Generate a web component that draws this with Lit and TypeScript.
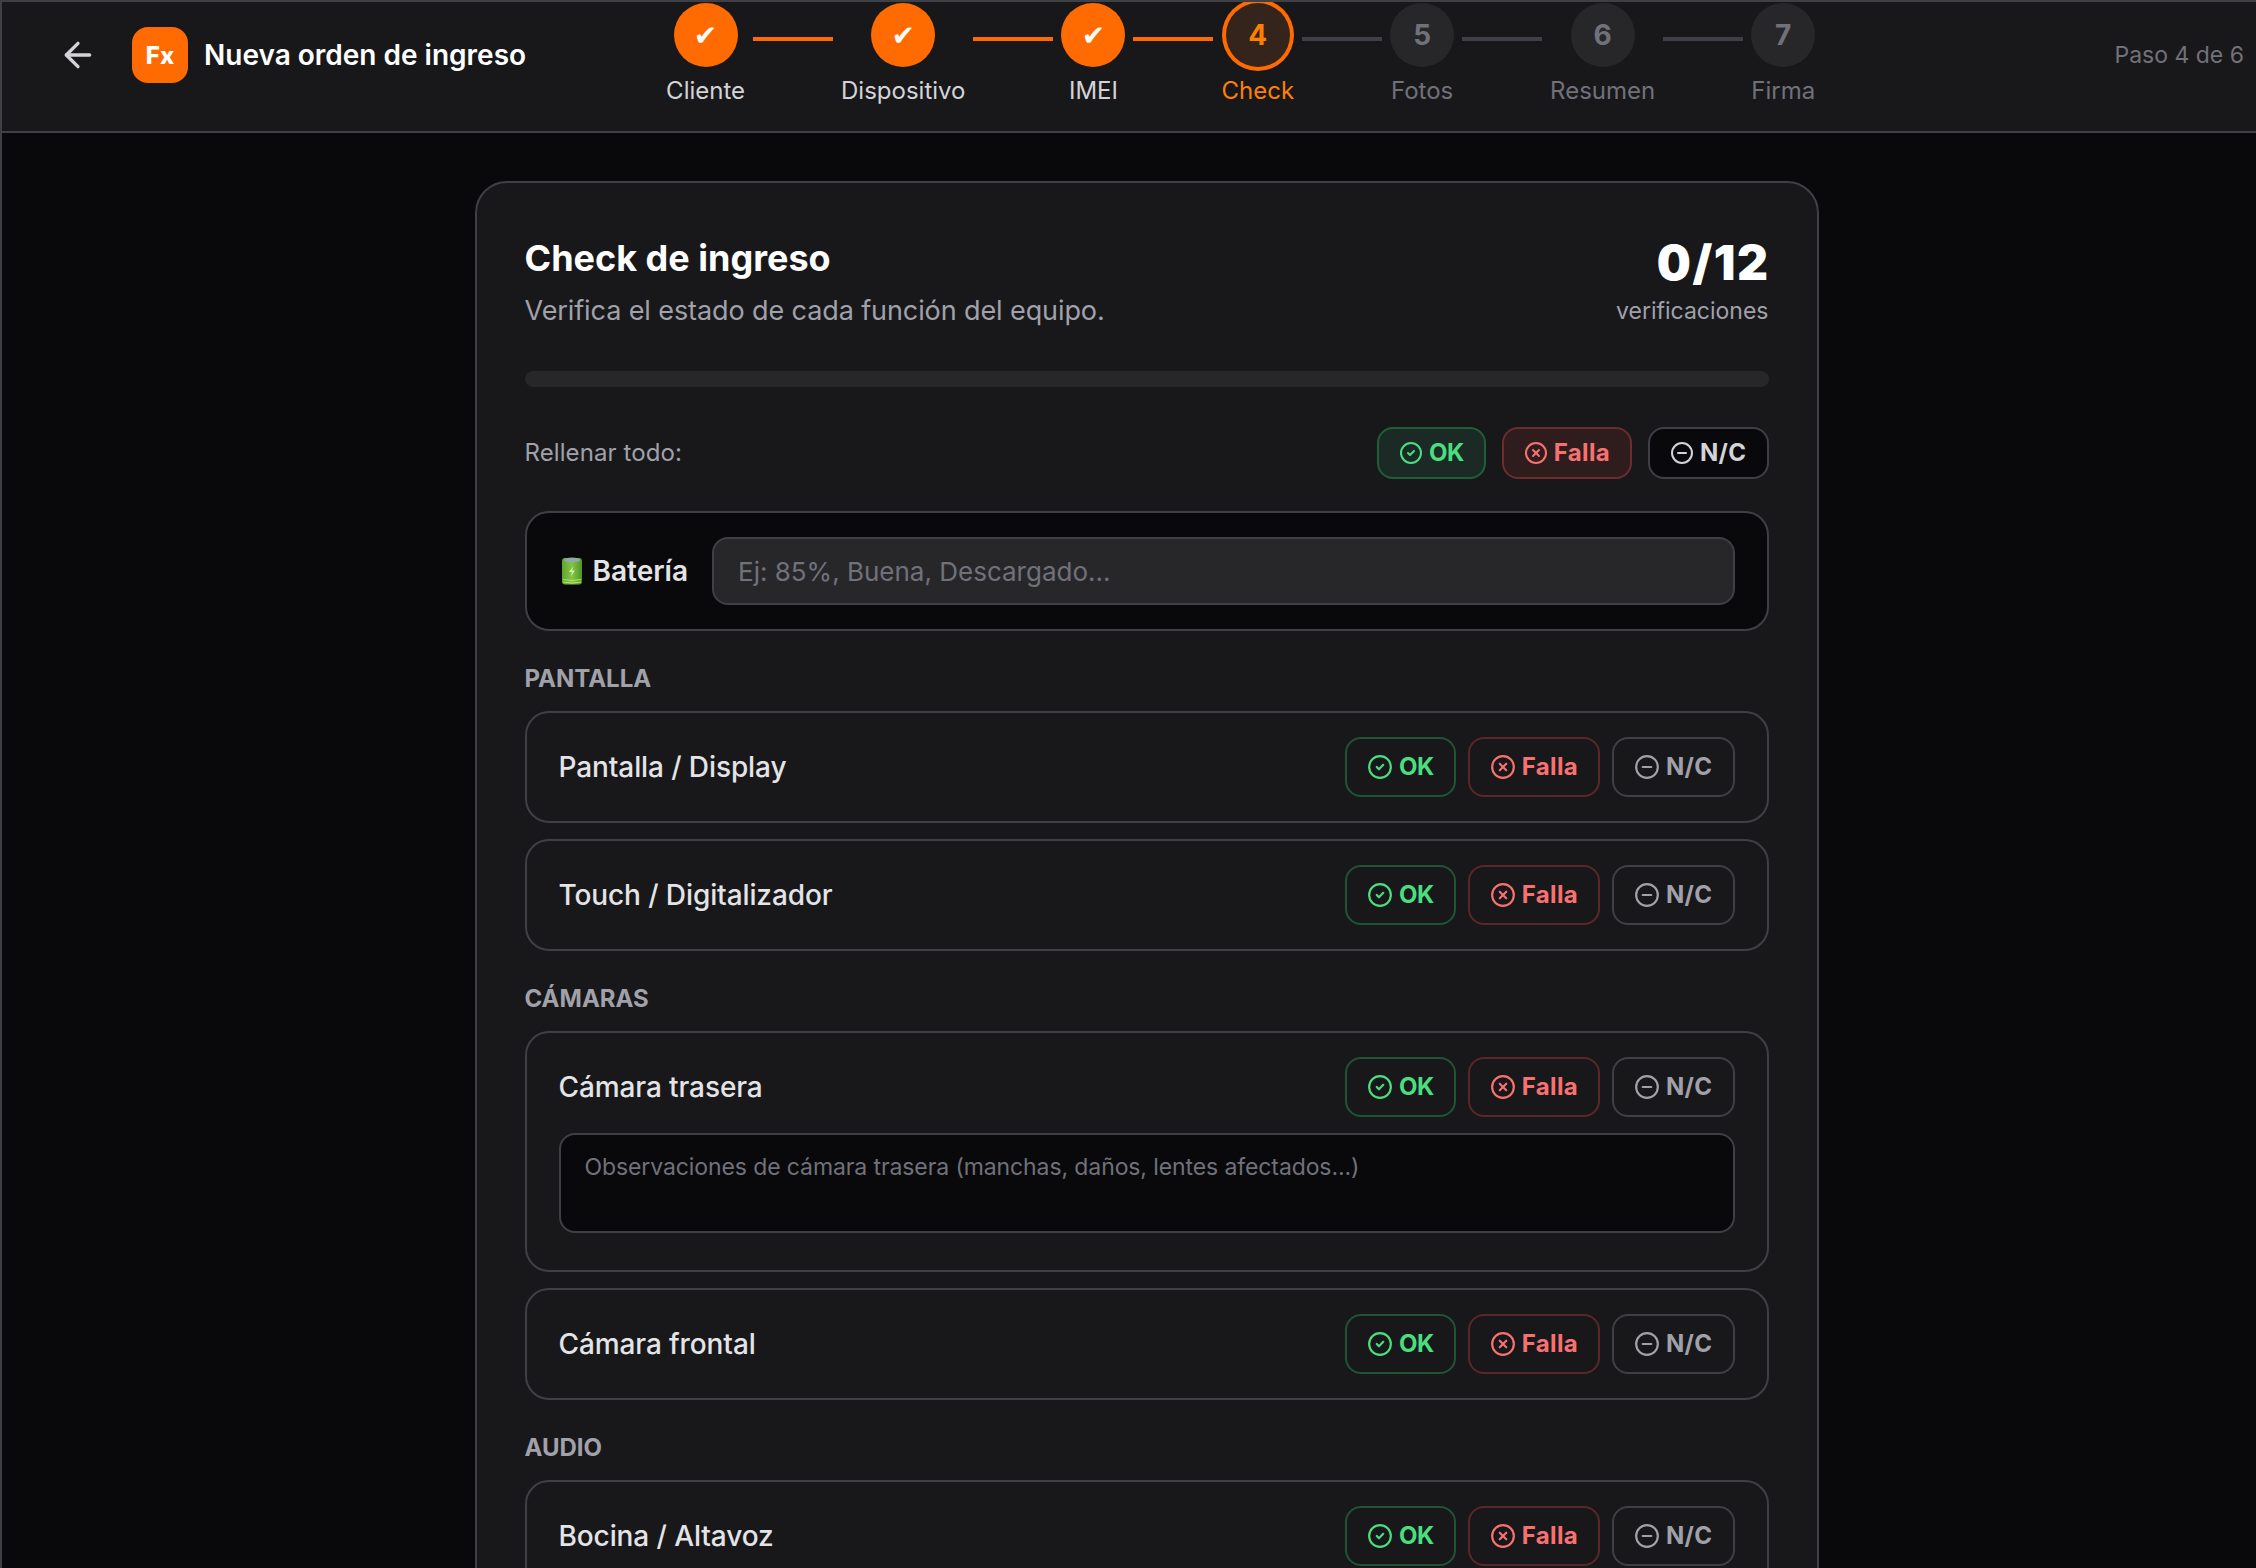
import { LitElement, html, css, svg } from "lit";
import { customElement } from "lit/decorators.js";

const steps = [
  { n: "1", label: "Cliente", state: "done" },
  { n: "2", label: "Dispositivo", state: "done" },
  { n: "3", label: "IMEI", state: "done" },
  { n: "4", label: "Check", state: "active" },
  { n: "5", label: "Fotos", state: "todo" },
  { n: "6", label: "Resumen", state: "todo" },
  { n: "7", label: "Firma", state: "todo" },
];

const sections = [
  {
    title: "Pantalla",
    rows: [{ label: "Pantalla / Display" }, { label: "Touch / Digitalizador" }],
  },
  {
    title: "Cámaras",
    rows: [
      {
        label: "Cámara trasera",
        note: "Observaciones de cámara trasera (manchas, daños, lentes afectados...)",
      },
      { label: "Cámara frontal" },
    ],
  },
  { title: "Audio", rows: [{ label: "Bocina / Altavoz" }] },
];

const icon = (inner: unknown) => html`<svg class="ico" viewBox="0 0 24 24" fill="none" stroke="currentColor" stroke-width="2" stroke-linecap="round" stroke-linejoin="round"><circle cx="12" cy="12" r="10"></circle>${inner}</svg>`;
const okIcon = () => icon(svg`<path d="m9 12 2 2 4-4"></path>`);
const failIcon = () => icon(svg`<path d="m15 9-6 6"></path><path d="m9 9 6 6"></path>`);
const naIcon = () => icon(svg`<path d="M8 12h8"></path>`);

@customElement("app-root")
export class AppRoot extends LitElement {
  static styles = css`
    :host {
      display: block;
      width: 2256px;
      height: 1568px;
      overflow: hidden;
      background: #09090b;
      font-family: Inter, "Liberation Sans", sans-serif;
    }
    * { box-sizing: border-box; }
    .page {
      width: 2291px;
      min-height: 1568px;
      border-left: 2px solid #3f3f46;
      background: #09090b;
    }
    header {
      height: 133px;
      display: flex;
      align-items: flex-start;
      padding: 1px 47px 0 46px;
      background: #18181b;
      border-top: 2px solid #3f3f46;
      border-bottom: 2px solid #3f3f46;
      overflow: hidden;
    }
    .left {
      display: flex;
      align-items: center;
      height: 56px;
      margin-top: 24px;
    }
    .back {
      width: 60px;
      height: 60px;
      display: flex;
      align-items: center;
      justify-content: center;
      color: #d4d4d8;
      margin-right: 24px;
    }
    .back svg { width: 40px; height: 40px; }
    .logo {
      width: 56px;
      height: 56px;
      border-radius: 16px;
      background: #ff6b00;
      color: #fff;
      font-weight: 800;
      font-size: 24px;
      display: flex;
      align-items: center;
      justify-content: center;
      margin-right: 16px;
    }
    .title {
      color: #fff;
      font-weight: 600;
      font-size: 28px;
      line-height: 36px;
      white-space: nowrap;
    }
    .stepper {
      display: flex;
      align-items: flex-start;
      margin-left: 140px;
    }
    .step {
      display: flex;
      flex-direction: column;
      align-items: center;
      gap: 8px;
      min-width: 64px;
    }
    .dot {
      width: 64px;
      height: 64px;
      border-radius: 50%;
      display: flex;
      align-items: center;
      justify-content: center;
      font-weight: 700;
      font-size: 28px;
      background: #27272a;
      color: #71717a;
    }
    .step.done .dot {
      background: #ff6b00;
      color: #fff;
      font-family: "DejaVu Sans", sans-serif;
      font-weight: 400;
      font-size: 28px;
    }
    .step.active .dot {
      background: #35241b;
      color: #ff8000;
      box-shadow: 0 0 0 4px #ff6b00;
    }
    .lbl {
      font-size: 24px;
      line-height: 32px;
      color: #71717a;
      white-space: nowrap;
    }
    .step.done .lbl { color: #d4d4d8; }
    .step.active .lbl { color: #ff8000; }
    .line {
      width: 80px;
      height: 4px;
      margin: 34px 8px 0;
      background: #3f3f46;
      flex: none;
    }
    .line.on { background: #ff6b00; }
    .pct {
      margin-left: auto;
      margin-top: 34px;
      font-size: 23px;
      line-height: 36px;
      color: #71717a;
      white-space: nowrap;
    }
    main {
      display: flex;
      justify-content: center;
      padding-top: 48px;
    }
    .card {
      width: 1344px;
      flex: none;
      padding: 48px;
      border: 2px solid #3f3f46;
      border-radius: 32px;
      background: #18181b;
    }
    .head {
      display: flex;
      justify-content: space-between;
      align-items: flex-start;
    }
    h1 {
      margin: 0;
      color: #fff;
      font-weight: 700;
      font-size: 36px;
      line-height: 54px;
    }
    .sub {
      margin-top: 6px;
      color: #a1a1aa;
      font-size: 27px;
      letter-spacing: -0.1px;
      line-height: 40px;
    }
    .count { text-align: right; }
    .num {
      color: #fff;
      font-weight: 900;
      font-size: 48px;
      line-height: 64px;
      letter-spacing: 1.5px;
      margin-right: -1px;
    }
    .cap {
      color: #a1a1aa;
      font-size: 23px;
      line-height: 32px;
    }
    .bar {
      height: 16px;
      margin-top: 40px;
      border-radius: 8px;
      background: #27272a;
    }
    .fill-row {
      display: flex;
      align-items: center;
      justify-content: space-between;
      margin-top: 40px;
    }
    .fill-row > span {
      color: #a1a1aa;
      font-size: 24px;
      letter-spacing: 0.1px;
      line-height: 32px;
    }
    .btns { display: flex; gap: 12px; }
    .fill-row .btns { gap: 16px; }
    .btn {
      display: flex;
      align-items: center;
      gap: 6px;
      padding: 12px 20px;
      height: 60px;
      border: 2px solid;
      border-radius: 16px;
      font-weight: 700;
      font-size: 24px;
      line-height: 32px;
      background: transparent;
      font-family: inherit;
    }
    .ico { width: 26px; height: 26px; flex: none; }
    .btn.ok { color: #4ade80; border-color: #1f5434; letter-spacing: -0.5px; }
    .btn.fail { color: #f87171; border-color: #5c2728; letter-spacing: 0.3px; }
    .btn.na { color: #a1a1aa; border-color: #3f3f46; letter-spacing: 0.4px; }
    .fill-row .btn { height: 52px; padding: 8px 20px; }
    .fill-row .ico { width: 24px; height: 24px; }
    .fill-row .btn.ok { background: #1b2a24; border-color: #1f5f38; }
    .fill-row .btn.fail { background: #2f1d1e; border-color: #6c2d2e; }
    .fill-row .btn.na { background: #09090b; color: #d4d4d8; }
    .battery {
      display: flex;
      align-items: center;
      gap: 24px;
      height: 120px;
      margin-top: 32px;
      padding: 24px 32px;
      border: 2px solid #3f3f46;
      border-radius: 24px;
      background: #09090b;
    }
    .bat-label {
      display: flex;
      align-items: center;
      gap: 11px;
      color: #e4e4e7;
      font-weight: 600;
      font-size: 28px;
      white-space: nowrap;
    }
    .bat-label svg { width: 20px; height: 28px; margin-left: 3px; }
    input {
      flex: 1;
      height: 68px;
      min-width: 0;
      padding: 0 24px;
      border: 2px solid #3f3f46;
      border-radius: 16px;
      background: #27272a;
      font-family: inherit;
      font-size: 26px;
      color: #fff;
      outline: none;
    }
    input::placeholder, textarea::placeholder { color: #71717a; opacity: 1; }
    h2 {
      margin: 32px 0 16px;
      color: #a1a1aa;
      font-size: 24px;
      font-weight: 700;
      line-height: 32px;
      text-transform: uppercase;
    }
    .rows { display: flex; flex-direction: column; gap: 16px; }
    .item {
      padding: 24px 32px;
      border: 2px solid #3f3f46;
      border-radius: 24px;
    }
    .item-top {
      display: flex;
      align-items: center;
      justify-content: space-between;
    }
    .item-top > span {
      color: #e4e4e7;
      font-weight: 500;
      font-size: 28px;
      letter-spacing: -0.1px;
    }
    textarea {
      display: block;
      width: 100%;
      height: 100px;
      margin: 16px 0 13px;
      padding: 16px 24px;
      border: 2px solid #3f3f46;
      border-radius: 16px;
      background: #09090b;
      font-family: inherit;
      font-size: 23px;
      letter-spacing: -0.1px;
      line-height: 32px;
      color: #fff;
      outline: none;
      resize: none;
    }
  `;

  private buttons() {
    return html`<div class="btns">
      <button class="btn ok">${okIcon()}OK</button>
      <button class="btn fail">${failIcon()}Falla</button>
      <button class="btn na">${naIcon()}N/C</button>
    </div>`;
  }

  render() {
    return html`<div class="page">
      <header>
        <div class="left">
          <div class="back">
            <svg viewBox="0 0 24 24" fill="none" stroke="currentColor" stroke-width="2" stroke-linecap="round" stroke-linejoin="round"><path d="m12 19-7-7 7-7"></path><path d="M19 12H5"></path></svg>
          </div>
          <div class="logo">Fx</div>
          <div class="title">Nueva orden de ingreso</div>
        </div>
        <div class="stepper">
          ${steps.map(
            (s, i) => html`
              ${i > 0 ? html`<div class="line ${i <= 3 ? "on" : ""}"></div>` : ""}
              <div class="step ${s.state}">
                <div class="dot">${s.state === "done" ? "✔" : s.n}</div>
                <div class="lbl">${s.label}</div>
              </div>
            `
          )}
        </div>
        <div class="pct">Paso 4 de 6</div>
      </header>
      <main>
        <div class="card">
          <div class="head">
            <div>
              <h1>Check de ingreso</h1>
              <div class="sub">Verifica el estado de cada función del equipo.</div>
            </div>
            <div class="count">
              <div class="num">0/12</div>
              <div class="cap">verificaciones</div>
            </div>
          </div>
          <div class="bar"></div>
          <div class="fill-row">
            <span>Rellenar todo:</span>
            ${this.buttons()}
          </div>
          <div class="battery">
            <div class="bat-label">
              <svg viewBox="0 0 20 28">
                <defs>
                  <linearGradient id="bg" x1="0" x2="1" y1="0" y2="0">
                    <stop offset="0" stop-color="#5da52f"></stop>
                    <stop offset="0.5" stop-color="#84c63f"></stop>
                    <stop offset="1" stop-color="#4f9528"></stop>
                  </linearGradient>
                </defs>
                <rect x="0" y="1" width="20" height="26.5" rx="3" fill="url(#bg)"></rect>
                <ellipse cx="10" cy="3" rx="8" ry="2.6" fill="#8fa9a8"></ellipse>
                <path d="M11.5 9 7 15h3l-1.5 4.5L13 13.5h-3z" fill="#d6efb0"></path>
                <path d="M1 22.5q9 2 18 0M1 25q9 2 18 0" stroke="#b5e07c" stroke-width="1" fill="none"></path>
              </svg>
              <span>Batería</span>
            </div>
            <input placeholder="Ej: 85%, Buena, Descargado..." />
          </div>
          ${sections.map(
            (sec) => html`
              <h2>${sec.title}</h2>
              <div class="rows">
                ${sec.rows.map(
                  (r: { label: string; note?: string }) => html`<div class="item">
                    <div class="item-top"><span>${r.label}</span>${this.buttons()}</div>
                    ${r.note ? html`<textarea placeholder=${r.note}></textarea>` : ""}
                  </div>`
                )}
              </div>
            `
          )}
        </div>
      </main>
    </div>`;
  }
}
